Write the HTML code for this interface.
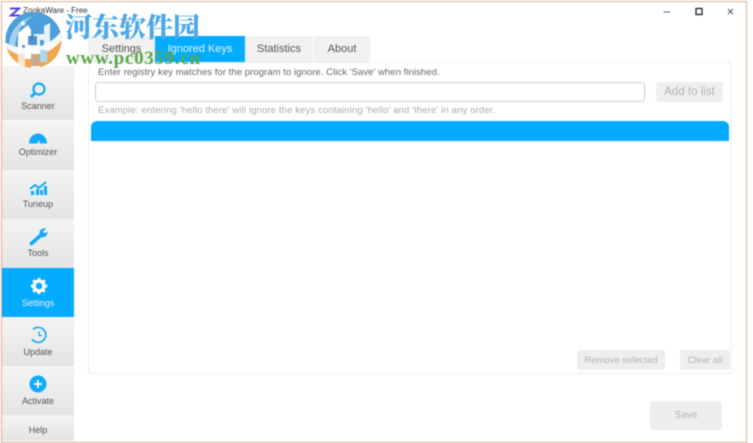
<!DOCTYPE html>
<html><head><meta charset="utf-8"><style>
html,body{margin:0;padding:0;width:753px;height:443px;overflow:hidden;background:#fff;font-family:"Liberation Sans",sans-serif}
#w{position:absolute;left:0;top:0;width:753px;height:443px;filter:blur(.5px)}
.a{position:absolute;white-space:nowrap}
.frame{left:1px;top:1px;width:744px;height:440px;border:1px solid #dcae90;background:#fff;box-sizing:content-box}
.nav{left:2px;width:72px;background:linear-gradient(#f4f4f4,#e4e4e4);text-align:center;font-size:9px;color:#555}
.nav span{position:absolute;left:0;right:0;text-align:center}
.nav svg{position:absolute;left:26px}
.tab{top:36px;height:26px;line-height:26px;text-align:center;font-size:11px;color:#555;background:#f1f1f1}
.btn{background:#eee;color:#b4b4b4;text-align:center;border-radius:3px}
</style></head><body><div id="w">
<div class="a frame"></div>
<div class="a" style="top:6px;font-size:8px;color:#333;left:23px">ZookaWare - Free</div>
<svg class="a" style="left:9px;top:7px" width="12" height="10"><path d="M1 1.500H10L2 8.500H11" fill="none" stroke="#5a3fe0" stroke-width="2"/></svg>
<svg class="a" style="left:660px;top:4px" width="80" height="16"><path d="M3.500 8H10" stroke="#666"/><rect x="36" y="4.500" width="6" height="6" fill="none" stroke="#222" stroke-width="1.300"/><path d="M68 5l5 5M73 5l-5 5" stroke="#555"/></svg>

<div class="a nav" style="top:66px;height:54px"><svg style="top:15px" width="20" height="22" viewBox="0 0 20 22"><circle cx="11" cy="8" r="5.500" fill="none" stroke="#12aafc" stroke-width="2.200"/><path d="M7 12L3 16" stroke="#12aafc" stroke-width="3"/></svg><span style="top:35px">Scanner</span></div>
<div class="a nav" style="top:121px;height:49px"><svg style="top:12px;left:25px" width="22" height="12" viewBox="0 0 22 12"><path d="M2 10.500A9 10 0 0 1 20 10.500H13L12 7 10.500 10.500Z" fill="#12aafc"/></svg><span style="top:26px">Optimizer</span></div>
<div class="a nav" style="top:170px;height:49px"><svg style="top:10px;left:27px" width="20" height="16" viewBox="0 0 20 16"><path d="M1 9L6 5 10 8 17 2" fill="none" stroke="#12aafc" stroke-width="2"/><path d="M2 15v-4h3v4zM7 15v-6h3v6zM11 15v-5h3v5zM15 15v-9h3v9z" fill="#12aafc"/></svg><span style="top:29px">Tuneup</span></div>
<div class="a nav" style="top:219px;height:49px"><svg style="top:8px;left:27px" width="20" height="20" viewBox="0 0 20 20"><path d="M2.500 16.500L12 8" stroke="#12aafc" stroke-width="3.600" stroke-linecap="round"/><path d="M10.500 7A5 5 0 0 1 17 1.500L14 4.500 15.500 6.500 18.500 4.500A5 5 0 0 1 12 10Z" fill="#12aafc"/></svg><span style="top:29px">Tools</span></div>
<div class="a nav" style="top:268px;height:49px;background:#04acff;color:#eef"><svg style="top:9px;left:28px" width="18" height="18" viewBox="0 0 20 20"><circle cx="10" cy="10" r="5.500" fill="none" stroke="#fff" stroke-width="3.600"/><path d="M10 1v4M10 15v4M1 10h4M15 10h4M3.600 3.600l3 3M13.400 13.400l3 3M16.400 3.600l-3 3M6.600 13.400l-3 3" stroke="#fff" stroke-width="3"/></svg><span style="top:30px">Settings</span></div>
<div class="a nav" style="top:317px;height:49px"><svg style="top:9px;left:27px" width="20" height="18" viewBox="0 0 20 18"><path d="M4 3.500A7.500 7.500 0 1 1 3 13" fill="none" stroke="#12aafc" stroke-width="1.600"/><path d="M10 5.500V9.500H13" fill="none" stroke="#12aafc" stroke-width="1.200"/></svg><span style="top:30px">Update</span></div>
<div class="a nav" style="top:366px;height:49px"><svg style="top:9px;left:27px" width="18" height="18" viewBox="0 0 18 18"><circle cx="9" cy="9" r="8.500" fill="#12aafc"/><path d="M9 5v8M5 9h8" stroke="#fff" stroke-width="1.800"/></svg><span style="top:30px">Activate</span></div>
<div class="a nav" style="top:415px;height:26px"><span style="top:10px">Help</span></div>

<div class="a" style="left:88px;top:62px;width:644px;height:312px;border:1px solid #eee;border-radius:3px;box-sizing:border-box"></div>
<div class="a tab" style="left:88px;width:67px">Settings</div>
<div class="a tab" style="left:155px;width:90px;background:#04acff;color:#e4f4ff">Ignored Keys</div>
<div class="a tab" style="left:245px;width:68px">Statistics</div>
<div class="a tab" style="left:314px;width:56px">About</div>

<div class="a" style="left:98px;top:67px;font-size:9.500px;color:#666;letter-spacing:.06px">Enter registry key matches for the program to ignore. Click 'Save' when finished.</div>
<div class="a" style="left:95px;top:82px;width:550px;height:20px;border:1px solid #ccc;border-radius:3px;box-sizing:border-box"></div>
<div class="a btn" style="left:656px;top:82px;width:67px;height:20px;line-height:20px;font-size:11.500px">Add to list</div>
<div class="a" style="left:98px;top:105px;font-size:9.500px;color:#aaa;letter-spacing:.14px">Example: entering 'hello there' will ignore the keys containing 'hello' and 'there' in any order.</div>
<div class="a" style="left:91px;top:121px;width:638px;height:20px;background:#04acff;border-radius:6px 6px 0 0"></div>

<div class="a btn" style="left:577px;top:350px;width:88px;height:20px;line-height:21px;font-size:9.500px">Remove selected</div>
<div class="a btn" style="left:680px;top:350px;width:50px;height:20px;line-height:21px;font-size:9.500px">Clear all</div>
<div class="a btn" style="left:650px;top:401px;width:72px;height:29px;line-height:29px;font-size:10px">Save</div>

<svg class="a" style="left:4px;top:12px" width="60" height="56" viewBox="0 0 60 56">
<defs><clipPath id="c"><circle cx="29.500" cy="28" r="28"/></clipPath></defs>
<g clip-path="url(#c)">
<rect width="60" height="56" fill="#f0a850"/>
<path d="M0 0H60V20C50 38 20 42 0 30Z" fill="#4a9fdc"/>
<path d="M0 30C18 40 44 38 58 18L60 25C46 46 18 50 1 35Z" fill="#f4f8fb"/>
<path d="M5 32C6 20 14 8 30 4 18 10 12 20 11 36Z" fill="#cfe6f6" opacity=".7"/>
<path d="M14 21L24 13 27 18V47H21V33H18V38H14Z" fill="#fff"/>
<path d="M30 22H40V14L46 11V38H40V28H36V56H27V30Z" fill="#fff" opacity=".88"/>
<path d="M24 24H33V33H24Z" fill="#1f6fc0" opacity=".75"/>
<path d="M36 38H43V50H36Z" fill="#a8d8f4"/>
<path d="M27 42H36V54H27Z" fill="#b08a6a" opacity=".7"/>
<path d="M14 42H21V54H14Z" fill="#f8e6d0"/>
</g>
<path d="M19 8l1 2.200 2.300.2-1.800 1.500.6 2.300-2.100-1.200-2.100 1.200.6-2.300-1.800-1.500 2.300-.2z" fill="#fff"/>
</svg>
<div class="a" style="left:65px;top:12px;font-size:27px;line-height:32px;font-weight:900;color:#4da8e8;font-family:'Liberation Serif','Noto Serif CJK SC',serif">河东软件园</div>
<div class="a" style="left:66px;top:49px;font-size:19px;line-height:20px;font-weight:bold;color:#5aa84a;font-family:'Liberation Serif',serif;letter-spacing:.7px">www.pc0359.cn</div>
</div></body></html>
